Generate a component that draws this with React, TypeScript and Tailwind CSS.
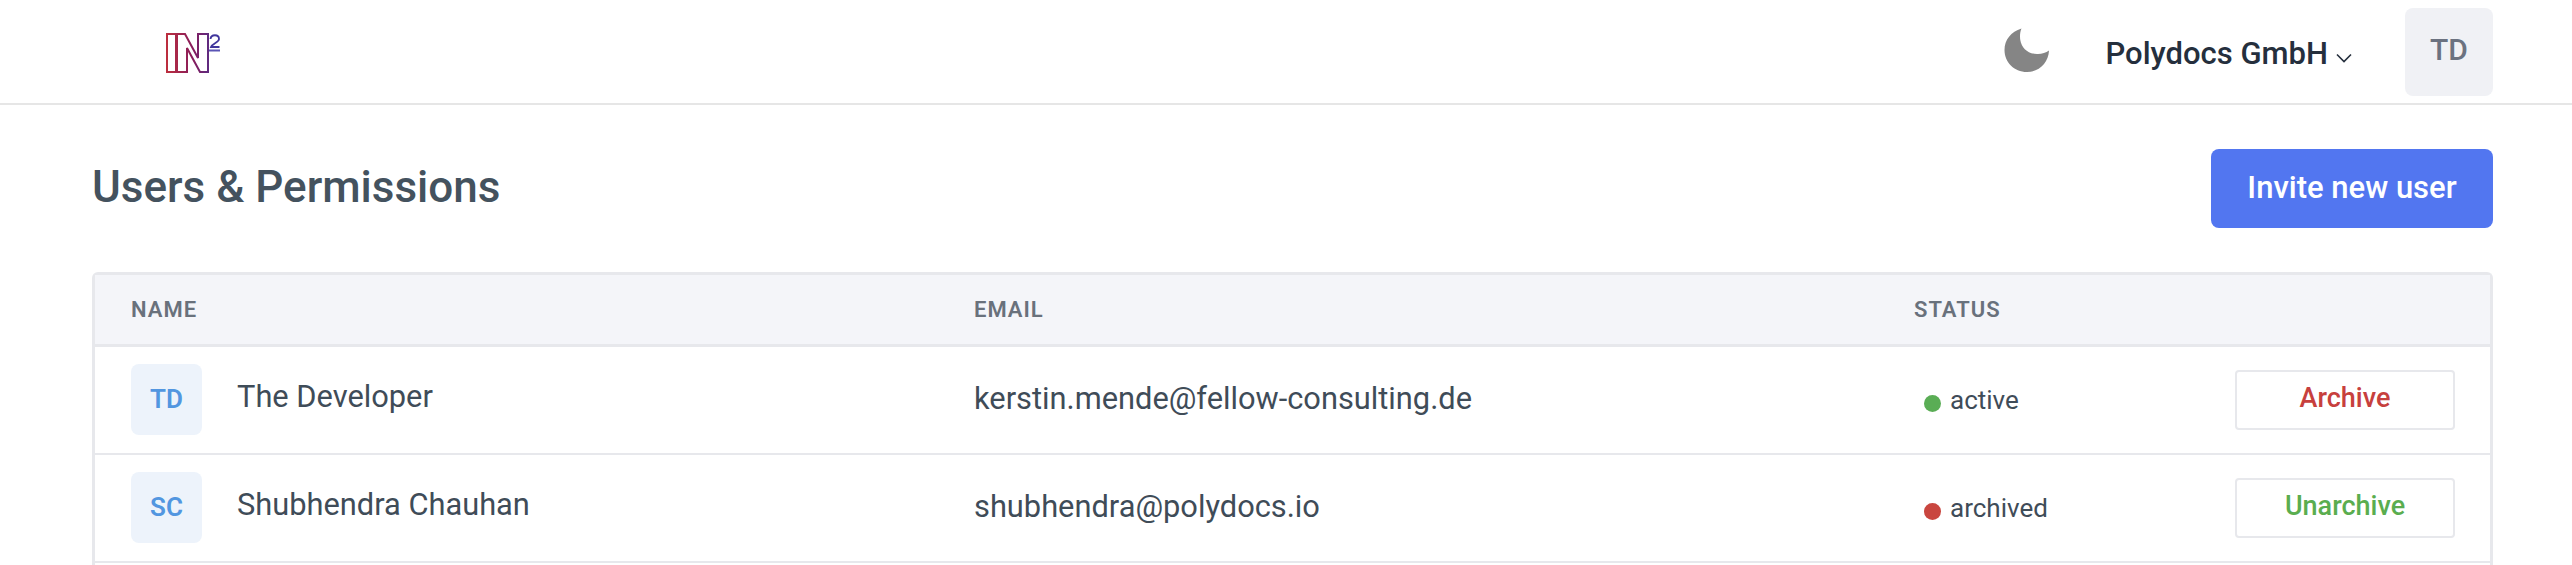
import React from "react";

function Logo() {
  return (
    <svg width="56" height="42" viewBox="0 0 56 42" fill="none" className="block">
      <defs>
        <linearGradient id="lg" x1="0" y1="0" x2="56" y2="0" gradientUnits="userSpaceOnUse">
          <stop offset="0" stopColor="#bf2f3c" />
          <stop offset="0.5" stopColor="#861c5c" />
          <stop offset="1" stopColor="#40369c" />
        </linearGradient>
      </defs>
      <path d="M2 2H11V40H2Z" stroke="url(#lg)" strokeWidth="2" />
      <path d="M12 40V2H20L33 26V2H43V40H35L22 16V40Z" stroke="url(#lg)" strokeWidth="2" />
      <path d="M45.5 7C46 2 54 2 54 7C54 10.5 47.5 11 46 15H54.5" stroke="#40369c" strokeWidth="1.8" />
      <path d="M44 18.5H55" stroke="#5a55b5" strokeWidth="2" />
    </svg>
  );
}

function Moon() {
  return (
    <svg width="46" height="44" viewBox="0 0 46 44" className="block">
      <path d="M17.5 0.5C16 4 15.7 8 16.3 12C17.5 20.5 25 26.5 34 26C38 25.8 42 24.8 45 22.5C44.5 34.5 35.5 44 23 44C10 44 0.5 34 0.5 22C0.5 12 7 3.5 17.5 0.5Z" fill="#858585" />
    </svg>
  );
}

const users = [
  { i: "TD", name: "The Developer", email: "kerstin.mende@fellow-consulting.de", status: "active", dot: "bg-[#5aad55]", action: "Archive", color: "text-[#c7403d]" },
  { i: "SC", name: "Shubhendra Chauhan", email: "shubhendra@polydocs.io", status: "archived", dot: "bg-[#c9463f]", action: "Unarchive", color: "text-[#5aad4f]" },
];

export default function App() {
  return (
    <div className="h-[565px] overflow-hidden bg-white font-['Roboto',sans-serif]">
      <header className="h-[105px] border-b-2 border-[#e6e6e6] flex items-center pl-[165px] pr-[79px]">
        <div className="mb-[-3px]"><Logo /></div>
        <div className="ml-auto mb-[4px] mr-[56px]"><Moon /></div>
        <div className="flex items-center mr-[50px] mb-[-4px]">
          <span className="text-[31px] font-medium text-[#252f3d] leading-none">Polydocs GmbH</span>
          <svg width="16" height="10" viewBox="0 0 16 10" fill="none" className="ml-[8px] mt-[8px] mr-[3px]">
            <path d="M1 1.5L8 8.5L15 1.5" stroke="#252f3d" strokeWidth="1.6" />
          </svg>
        </div>
        <div className="w-[88px] h-[88px] rounded-[8px] bg-[#f0f1f5] flex items-center justify-center pb-[4px] text-[30px] font-medium text-[#6b7280]">TD</div>
      </header>
      <main className="pl-[92px] pr-[79px]">
        <div className="flex items-center justify-between pt-[44px]">
          <h1 className="text-[44px] font-medium text-[#44525e] leading-none mb-[3px]">Users &amp; Permissions</h1>
          <button className="w-[282px] h-[79px] rounded-[8px] bg-[#5276f0] text-white text-[31px] font-medium">Invite new user</button>
        </div>
        <div className="mt-[44px] border-[3px] border-b-0 border-[#e7e8ec] rounded-t-[6px]">
          <div className="h-[72px] flex items-center bg-[#f4f5f9] border-b-[3px] border-[#e7e8ec] text-[22px] font-semibold tracking-[1px] text-[#69717c]">
            <div className="w-[879px] pl-[36px]">NAME</div>
            <div className="w-[940px]">EMAIL</div>
            <div>STATUS</div>
          </div>
          {users.map((u) => (
            <div key={u.i} className="h-[108px] flex items-center border-b-[2px] border-[#e7e8ec]">
              <div className="w-[879px] pl-[36px] flex items-center">
                <div className="w-[71px] h-[71px] mt-[-1px] rounded-[8px] bg-[#edf3fb] flex items-center justify-center text-[26px] font-semibold text-[#5296e0]">{u.i}</div>
                <div className="ml-[35px] mb-[5px] text-[30.8px] text-[#3f4c58]">{u.name}</div>
              </div>
              <div className="w-[940px] mb-[1px] text-[30.8px] text-[#3f4c58]">{u.email}</div>
              <div className="flex-1 flex items-center pl-[10px] pr-[36px]">
                <span className={`w-[17px] h-[17px] rounded-full ${u.dot} mt-[6px]`} />
                <span className="ml-[9px] text-[26px] text-[#3f4c58]">{u.status}</span>
                <button className={`ml-auto w-[220px] h-[60px] mt-[-1px] mr-[-1px] rounded-[4px] border-[2px] border-[#e7e8ec] bg-white text-[27px] font-medium ${u.color} pb-[3px]`}>{u.action}</button>
              </div>
            </div>
          ))}
          <div className="h-[108px]" />
        </div>
      </main>
    </div>
  );
}
